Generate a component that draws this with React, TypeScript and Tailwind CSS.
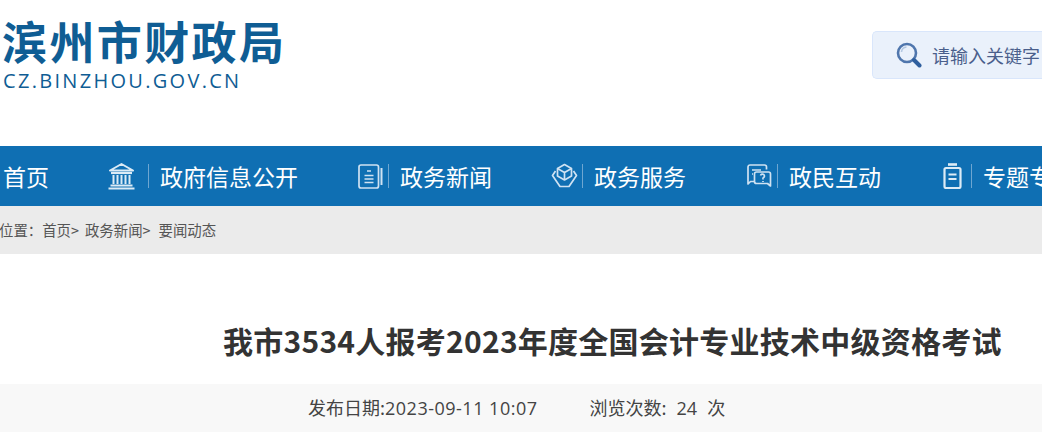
import type { ReactNode } from "react"

const BankIcon = () => (
  <svg className="-ml-px" width="29" height="28" viewBox="0 0 29 28" fill="none" stroke="#dcebf6" strokeWidth="2">
    <path d="M14.5 2 26 8.500H3Z" strokeLinejoin="round" />
    <path d="M4 11h21" strokeWidth="2.200" />
    <path d="M6.500 13v9M10.500 13v9M14.500 13v9M18.500 13v9M22.500 13v9" strokeWidth="2" />
    <path d="M3.500 23.500h22M1.500 26.500h26" strokeWidth="2.200" />
  </svg>
)

const NewsIcon = () => (
  <svg width="25" height="25" viewBox="0 0 25 25" fill="none" stroke="#cfe2f2" strokeWidth="1.700">
    <rect x="1" y="1" width="19.500" height="23" rx="2" />
    <path d="M23.500 4v17" strokeWidth="2" />
    <path d="M9 7h4M6.500 11.500h9M6.500 15h9M6.500 18.500h9" />
  </svg>
)

const ServiceIcon = () => (
  <svg width="27" height="27" viewBox="0 0 27 27" fill="none" stroke="#cfe2f2" strokeWidth="1.700" strokeLinejoin="round">
    <path d="M13.500 1.500 20.500 5.500V13L13.500 17 6.500 13V5.500Z" />
    <path d="M6.500 5.500 13.500 9.500 20.500 5.500M13.500 9.500V17" />
    <path d="M4.500 8 1.500 12.500 9 23.500H18L25.500 12.500 22.500 8" />
  </svg>
)

const ChatIcon = () => (
  <svg width="25" height="24" viewBox="0 0 25 24" fill="none" stroke="#cfe2f2" strokeWidth="1.700" strokeLinejoin="round">
    <path d="M7 17.500H3.500L1 20V3A2 2 0 0 1 3 1H17.500A2 2 0 0 1 19.500 3V5.500" />
    <path d="M9.500 8H21.500A2 2 0 0 1 23.500 10V22L20.500 19.500H9.500A2 2 0 0 1 7.500 17.500V10A2 2 0 0 1 9.500 8Z" />
    <path d="M5 6h9M5 10h1" />
    <path d="M13.500 11.500a2 2 0 1 1 2.500 2.500v1.500M16 17v1" />
  </svg>
)

const ClipIcon = () => (
  <svg width="19" height="26" viewBox="0 0 19 26" fill="none" stroke="#dcebf6" strokeWidth="2.200">
    <path d="M5 1.500h9" strokeWidth="2.600" />
    <rect x="1.500" y="5" width="16" height="20" rx="1.500" />
    <path d="M5.500 11.500h8M5.500 16h8" />
  </svg>
)

const SearchIcon = () => (
  <svg width="26" height="26" viewBox="0 0 26 26" fill="none">
    <circle cx="11" cy="11" r="9" stroke="#4f76ad" strokeWidth="2.600" />
    <path d="M5.500 10a5.500 5.500 0 0 1 5-5" stroke="#b4c8e2" strokeWidth="1.600" />
    <path d="M18 18l5.500 5.500" stroke="#2f5f9e" strokeWidth="4" strokeLinecap="round" />
  </svg>
)

const navItems: { label: string; icon: ReactNode; iconClass: string }[] = [
  { label: "政府信息公开", icon: <BankIcon />, iconClass: "w-[40px]" },
  { label: "政务新闻", icon: <NewsIcon />, iconClass: "w-[30px]" },
  { label: "政务服务", icon: <ServiceIcon />, iconClass: "-ml-px w-[31px]" },
  { label: "政民互动", icon: <ChatIcon />, iconClass: "ml-px w-[30px]" },
  { label: "专题专栏", icon: <ClipIcon />, iconClass: "ml-[2px] w-[28px]" },
]

export default function App() {
  return (
    <div className="h-[438px] w-[1042px] overflow-hidden bg-white font-['Noto_Sans_CJK_SC','Noto_Sans',sans-serif]">
      <header className="flex h-[146px] items-start justify-between">
        <div className="pl-[3px] pt-[18px] text-[#0f5d94]">
          <div className="-ml-px whitespace-nowrap text-[45px] leading-[46px] font-bold tracking-[2.4px]">滨州市财政局</div>
          <div className="mt-[7px] whitespace-nowrap font-['Open_Sans',sans-serif] text-[20px] leading-[20px] tracking-[2.3px]">
            CZ.BINZHOU.GOV.CN
          </div>
        </div>
        <div className="mt-[31px] flex h-[48px] w-[170px] shrink-0 items-center rounded-l-[5px] border border-r-0 border-[#d9e6fb] bg-[#eaf1fb] pl-[23px]">
          <SearchIcon />
          <span className="ml-[10px] whitespace-nowrap text-[18px] text-[#4a5f8c]">请输入关键字</span>
        </div>
      </header>

      <nav className="flex h-[60px] items-center gap-[60px] whitespace-nowrap bg-[#0f6fb3] pl-[3px] text-[23px] text-white">
        <span className="-mr-px">首页</span>
        {navItems.map((item) => (
          <div key={item.label} className="flex shrink-0 items-center">
            <div className={`${item.iconClass} flex items-center`}>{item.icon}</div>
            <div className="h-[24px] w-px bg-[#6ea6d1]" />
            <span className="ml-[11px]">{item.label}</span>
          </div>
        ))}
      </nav>

      <div className="flex h-[48px] items-center whitespace-nowrap bg-[#ebebeb] text-[14.4px] text-[#555555]">
        <span className="-ml-px">位置：</span>
        <span>首页&gt;</span>
        <span className="ml-[6px]">政务新闻&gt;</span>
        <span className="ml-[8px]">要闻动态</span>
      </div>

      <h1 className="h-[130px] whitespace-nowrap pl-[223px] pt-[65px] text-[30px] leading-[42px] font-bold tracking-[0.25px] text-[#333333]">
        我市3534人报考2023年度全国会计专业技术中级资格考试
      </h1>

      <div className="flex h-[48px] items-center gap-[52px] whitespace-nowrap bg-[#f8f8f8] pl-[308px] text-[18px] text-[#444444]">
        <span>
          发布日期:<span className="font-['Open_Sans',sans-serif] tracking-[0.5px]">2023-09-11 10:07</span>
        </span>
        <span>
          浏览次数:
          <span className="ml-[10px] font-['Open_Sans',sans-serif]">24</span>
          <span className="ml-[10px]">次</span>
        </span>
      </div>
    </div>
  )
}
